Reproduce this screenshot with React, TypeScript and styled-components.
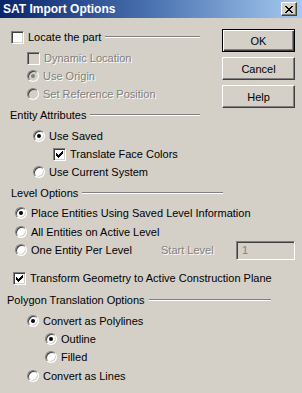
import styled, { createGlobalStyle } from "styled-components";

const GlobalStyle = createGlobalStyle`
  html, body {
    margin: 0;
    padding: 0;
    background: #d4d0c8;
  }
`;

const Window = styled.div`
  width: 302px;
  height: 393px;
  background: #d4d0c8;
  font-family: "Liberation Sans", Arial, sans-serif;
  font-size: 11px;
  color: #000;
  overflow: hidden;
`;

const TitleBar = styled.div`
  height: 18px;
  display: flex;
  align-items: center;
  justify-content: space-between;
  padding: 0 5px 0 3px;
  background: linear-gradient(to right, #0a246a 0%, #4a72b0 50%, #a6caf0 100%);
`;

const Title = styled.span`
  color: #fff;
  font-weight: bold;
  font-size: 12px;
`;

const CloseButton = styled.div`
  width: 16px;
  height: 14px;
  box-sizing: border-box;
  background: #d4d0c8;
  border: 1px solid;
  border-color: #fff #404040 #404040 #fff;
  box-shadow: inset -1px -1px #808080;
  display: flex;
  align-items: center;
  justify-content: center;
`;

const Body = styled.div`
  padding-top: 10px;
`;

const Top = styled.div`
  display: flex;
`;

const LeftCol = styled.div`
  width: 200px;
`;

const ButtonCol = styled.div`
  margin-left: 22px;
  display: flex;
  flex-direction: column;
  gap: 5px;
  padding-top: 1px;
`;

const Button = styled.div<{ $default?: boolean }>`
  width: 73px;
  height: 23px;
  box-sizing: border-box;
  display: flex;
  align-items: center;
  justify-content: center;
  background: #d4d0c8;
  border: 1px solid;
  border-color: ${(p) => (p.$default ? "#000" : "#fff #404040 #404040 #fff")};
  box-shadow: ${(p) =>
    p.$default
      ? "inset 1px 1px #fff, inset -1px -1px #404040, inset -2px -2px #808080"
      : "inset -1px -1px #808080"};
`;

const Row = styled.div<{ $mt?: number; $pl: number }>`
  height: 18px;
  display: flex;
  align-items: center;
  margin-top: ${(p) => p.$mt ?? 0}px;
  padding-left: ${(p) => p.$pl}px;
`;

const Header = styled.div<{ $mt?: number; $pl: number; $end: number }>`
  height: 18px;
  display: flex;
  align-items: center;
  margin-top: ${(p) => p.$mt ?? 0}px;
  padding-left: ${(p) => p.$pl}px;
  width: ${(p) => p.$end}px;
  box-sizing: border-box;
`;

const Rule = styled.div`
  flex: 1;
  margin-left: 4px;
  height: 0;
  border-top: 1px solid #808080;
  border-bottom: 1px solid #fff;
`;

const Label = styled.span<{ $disabled?: boolean }>`
  margin-left: 4px;
  white-space: nowrap;
  color: ${(p) => (p.$disabled ? "#808080" : "#000")};
  text-shadow: ${(p) => (p.$disabled ? "1px 1px 0 #fff" : "none")};
`;

const Box = styled.div<{ $disabled?: boolean }>`
  width: 13px;
  height: 13px;
  flex: none;
  box-sizing: border-box;
  border: 1px solid;
  border-color: #808080 #fff #fff #808080;
  box-shadow: inset 1px 1px #404040, inset -1px -1px #d4d0c8;
  background: ${(p) => (p.$disabled ? "#d4d0c8" : "#fff")};
  display: flex;
  align-items: center;
  justify-content: center;
`;

const Radio = styled.div<{ $disabled?: boolean; $on?: boolean }>`
  width: 12px;
  height: 12px;
  flex: none;
  box-sizing: border-box;
  border-radius: 50%;
  border: 1px solid;
  border-color: #808080 #fff #fff #808080;
  box-shadow: inset 1px 1px #404040, inset -1px -1px #d4d0c8;
  background: ${(p) => (p.$disabled ? "#d4d0c8" : "#fff")};
  display: flex;
  align-items: center;
  justify-content: center;
  &::after {
    content: "";
    display: ${(p) => (p.$on ? "block" : "none")};
    width: 4px;
    height: 4px;
    border-radius: 50%;
    background: ${(p) => (p.$disabled ? "#808080" : "#000")};
  }
`;

const Choice = styled.div<{ $w?: number }>`
  display: flex;
  align-items: center;
  width: ${(p) => (p.$w ? `${p.$w}px` : "auto")};
`;

const StartLabel = styled.span`
  width: 75px;
  color: #808080;
  text-shadow: 1px 1px 0 #fff;
`;

const NumberInput = styled.div`
  width: 59px;
  height: 19px;
  box-sizing: border-box;
  border: 1px solid;
  border-color: #808080 #fff #fff #808080;
  box-shadow: inset 1px 1px #404040, inset -1px -1px #d4d0c8;
  background: #d4d0c8;
  color: #808080;
  padding-left: 5px;
  display: flex;
  align-items: center;
`;

function Check({ checked, disabled }: { checked?: boolean; disabled?: boolean }) {
  return (
    <Box $disabled={disabled}>
      {checked && (
        <svg width="7" height="7" viewBox="0 0 7 7">
          <path d="M0 2h1v1h1v1h1v-1h1v-1h1v-1h1v-1h1v3h-1v1h-1v1h-1v1h-1v1h-1v-1h-1v-1h-1z" fill="#000" />
        </svg>
      )}
    </Box>
  );
}

export default function App() {
  return (
    <Window>
      <GlobalStyle />
      <TitleBar>
        <Title>SAT Import Options</Title>
        <CloseButton>
          <svg width="8" height="7" viewBox="0 0 8 7">
            <path d="M0 0h2v1h1v1h2v-1h1v-1h2v1h-1v1h-1v1h-1v1h1v1h1v1h1v1h-2v-1h-1v-1h-2v1h-1v1h-2v-1h1v-1h1v-1h1v-1h-1v-1h-1v-1h-1z" fill="#000" />
          </svg>
        </CloseButton>
      </TitleBar>
      <Body>
        <Top>
          <LeftCol>
            <Header $pl={11} $end={200}>
              <Check />
              <Label>Locate the part</Label>
              <Rule />
            </Header>
            <Row $mt={3} $pl={27}>
              <Check disabled />
              <Label $disabled>Dynamic Location</Label>
            </Row>
            <Row $pl={27}>
              <Radio $disabled $on />
              <Label $disabled>Use Origin</Label>
            </Row>
            <Row $pl={27}>
              <Radio $disabled />
              <Label $disabled>Set Reference Position</Label>
            </Row>
            <Header $mt={3} $pl={10} $end={200}>
              <span>Entity Attributes</span>
              <Rule />
            </Header>
            <Row $mt={3} $pl={33}>
              <Radio $on />
              <Label>Use Saved</Label>
            </Row>
            <Row $pl={53}>
              <Check checked />
              <Label>Translate Face Colors</Label>
            </Row>
            <Row $pl={33}>
              <Radio />
              <Label>Use Current System</Label>
            </Row>
          </LeftCol>
          <ButtonCol>
            <Button $default>OK</Button>
            <Button>Cancel</Button>
            <Button>Help</Button>
          </ButtonCol>
        </Top>

        <Header $mt={3} $pl={11} $end={223}>
          <span>Level Options</span>
          <Rule />
        </Header>
        <Row $mt={2} $pl={15}>
          <Radio $on />
          <Label>Place Entities Using Saved Level Information</Label>
        </Row>
        <Row $mt={1} $pl={15}>
          <Radio />
          <Label>All Entities on Active Level</Label>
        </Row>
        <Row $pl={15}>
          <Choice $w={146}>
            <Radio />
            <Label>One Entity Per Level</Label>
          </Choice>
          <StartLabel>Start Level</StartLabel>
          <NumberInput>1</NumberInput>
        </Row>
        <Row $mt={10} $pl={13}>
          <Check checked />
          <Label>Transform Geometry to Active Construction Plane</Label>
        </Row>

        <Header $mt={4} $pl={7} $end={271}>
          <span>Polygon Translation Options</span>
          <Rule />
        </Header>
        <Row $mt={3} $pl={27}>
          <Radio $on />
          <Label>Convert as Polylines</Label>
        </Row>
        <Row $pl={45}>
          <Radio $on />
          <Label>Outline</Label>
        </Row>
        <Row $pl={45}>
          <Radio />
          <Label>Filled</Label>
        </Row>
        <Row $mt={1} $pl={27}>
          <Radio />
          <Label>Convert as Lines</Label>
        </Row>
      </Body>
    </Window>
  );
}
